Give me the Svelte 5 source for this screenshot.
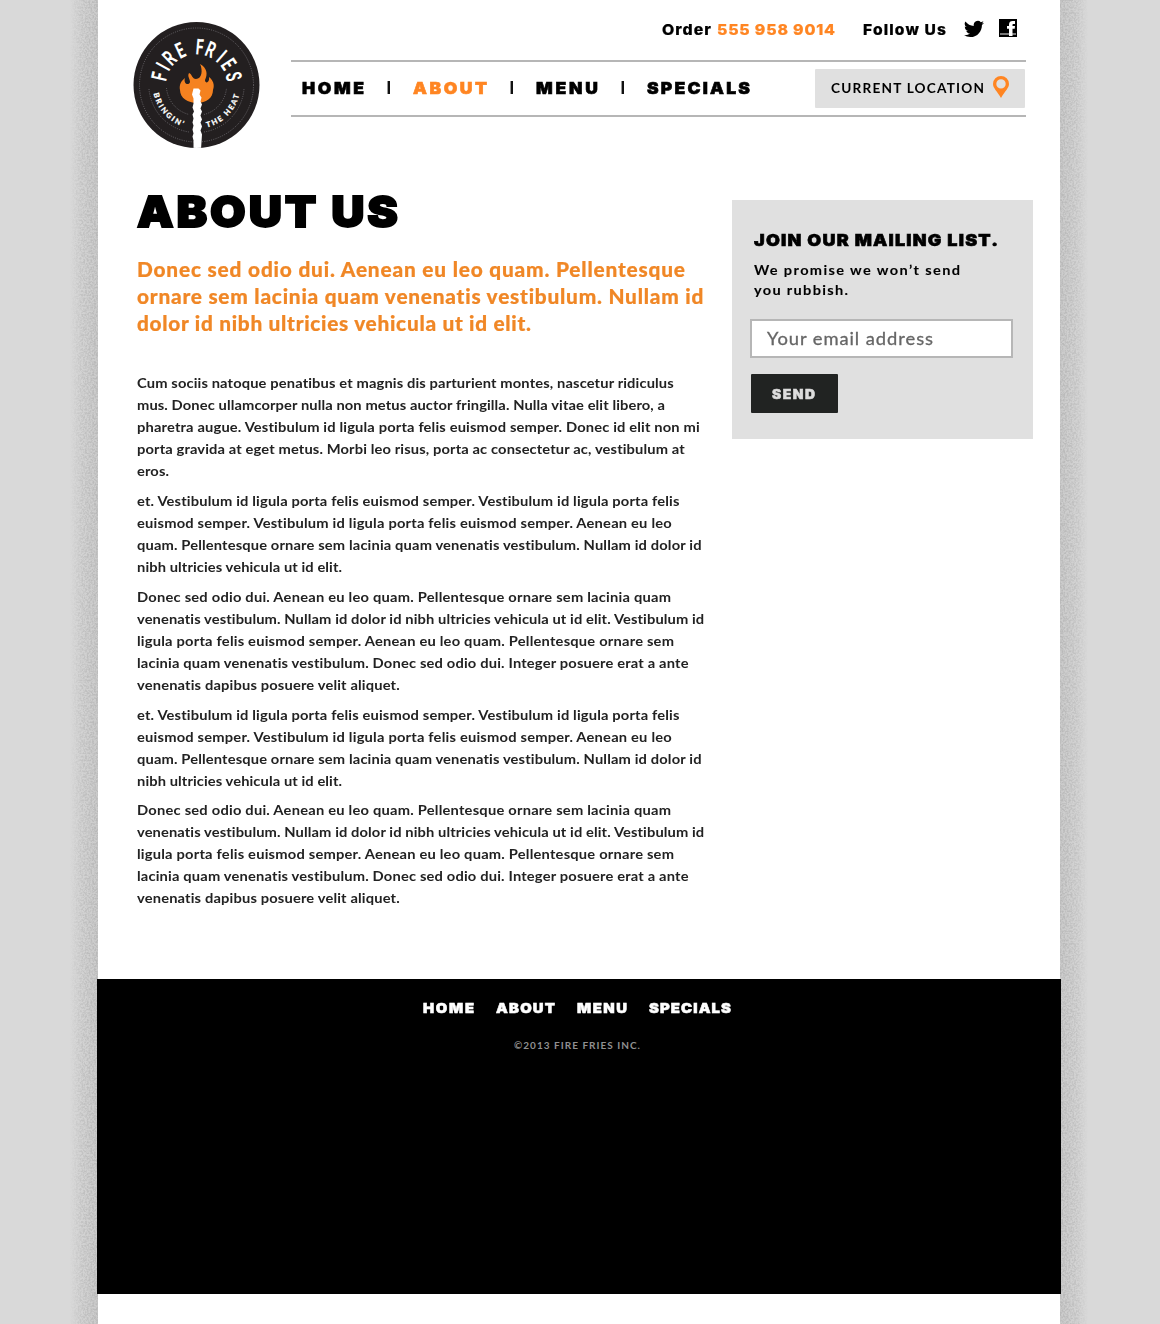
<script>
  const nav = [
    { label: 'HOME', width: 62, active: false },
    { label: 'ABOUT', width: 74, active: true },
    { label: 'MENU', width: 62, active: false },
    { label: 'SPECIALS', width: 103, active: false }
  ];
  const footerNav = [
    { label: 'HOME', width: 51 },
    { label: 'ABOUT', width: 59 },
    { label: 'MENU', width: 50 },
    { label: 'SPECIALS', width: 82 }
  ];
  // Letters of the badge and their bearing, in degrees from twelve o'clock.
  const brand = [['F', -77], ['I', -61], ['R', -45], ['E', -25], ['F', 5], ['R', 22], ['I', 41], ['E', 57], ['S', 77]];

  const intro = [
    ['Donec sed odio dui. Aenean eu leo quam. Pellentesque', 548],
    ['ornare sem lacinia quam venenatis vestibulum. Nullam id', 567],
    ['dolor id nibh ultricies vehicula ut id elit.', 394]
  ];
  const vestibulum = [
    ['et. Vestibulum id ligula porta felis euismod semper. Vestibulum id ligula porta felis', 543],
    ['euismod semper. Vestibulum id ligula porta felis euismod semper. Aenean eu leo', 535],
    ['quam. Pellentesque ornare sem lacinia quam venenatis vestibulum. Nullam id dolor id', 565],
    ['nibh ultricies vehicula ut id elit.', 205]
  ];
  const donec = [
    ['Donec sed odio dui. Aenean eu leo quam. Pellentesque ornare sem lacinia quam', 534],
    ['venenatis vestibulum. Nullam id dolor id nibh ultricies vehicula ut id elit. Vestibulum id', 568],
    ['ligula porta felis euismod semper. Aenean eu leo quam. Pellentesque ornare sem', 537],
    ['lacinia quam venenatis vestibulum. Donec sed odio dui. Integer posuere erat a ante', 552],
    ['venenatis dapibus posuere velit aliquet.', 263]
  ];
  const paragraphs = [
    [
      ['Cum sociis natoque penatibus et magnis dis parturient montes, nascetur ridiculus', 537],
      ['mus. Donec ullamcorper nulla non metus auctor fringilla. Nulla vitae elit libero, a', 528],
      ['pharetra augue. Vestibulum id ligula porta felis euismod semper. Donec id elit non mi', 563],
      ['porta gravida at eget metus. Morbi leo risus, porta ac consectetur ac, vestibulum at', 548],
      ['eros.', 32]
    ],
    vestibulum,
    donec,
    vestibulum,
    donec
  ];

  // Sets a line of type to a measure: widens the glyphs, then tracks the rest.
  function track(node, [width, stretch = 1]) {
    const inner = width / stretch;
    const natural = node.getBoundingClientRect().width;
    const spacing = (inner - natural) / (node.textContent.length - 1);
    node.style.letterSpacing = spacing + 'px';
    node.style.marginRight = width - inner - spacing + 'px';
    if (stretch !== 1) {
      node.style.transformOrigin = '0 50%';
      node.style.transform = `scaleX(${stretch})`;
    }
  }
</script>

<div class="page">
  <svg class="grain" aria-hidden="true">
    <defs>
      <filter id="noise" x="0" y="0" width="100%" height="100%" color-interpolation-filters="sRGB">
        <feTurbulence type="fractalNoise" baseFrequency="0.55" numOctaves="2" seed="4" />
        <feColorMatrix values="0 0 0 0 0.71  0 0 0 0 0.71  0 0 0 0 0.71  3 0 0 0 -1.1" />
      </filter>
      <linearGradient id="fadeL"><stop offset="0" stop-color="#000" /><stop offset=".4" stop-color="#888" /><stop offset="1" stop-color="#ddd" /></linearGradient>
      <linearGradient id="fadeR"><stop offset="0" stop-color="#ddd" /><stop offset=".6" stop-color="#888" /><stop offset="1" stop-color="#000" /></linearGradient>
      <mask id="maskL" maskUnits="userSpaceOnUse" x="70" y="0" width="28" height="1324"><rect x="70" width="28" height="1324" fill="url(#fadeL)" /></mask>
      <mask id="maskR" maskUnits="userSpaceOnUse" x="1060" y="0" width="28" height="1324"><rect x="1060" width="28" height="1324" fill="url(#fadeR)" /></mask>
    </defs>
    <g mask="url(#maskL)"><rect x="70" width="28" height="1324" filter="url(#noise)" /></g>
    <g mask="url(#maskR)"><rect x="1060" width="28" height="1324" filter="url(#noise)" /></g>
  </svg>

  <div class="sheet">
    <header>
      <svg class="logo" viewBox="0 0 128 127" role="img" aria-label="Fire Fries">
        <defs>
          <path id="arcLeft" d="M20.500 70.500 A43.6 43.6 0 0 0 60 106.500" />
          <path id="arcRight" d="M67 106.500 A43.6 43.6 0 0 0 106.800 70" />
          <clipPath id="disc"><circle cx="63.5" cy="63" r="63" /></clipPath>
        </defs>
        <circle cx="63.5" cy="63" r="63" fill="#231f20" />
        <g fill="none" stroke="#77757a" stroke-width=".8" stroke-dasharray="1 1.3">
          <circle cx="63.5" cy="63" r="57" />
          <path d="M16 67 A47.5 47.5 0 0 0 56 110 M71 110 A47.5 47.5 0 0 0 111 67 M33.5 66 A30 30 0 0 0 56 92.5 M71 92.5 A30 30 0 0 0 93.500 66" />
        </g>
        <g fill="#fff">
          {#each brand as [letter, angle]}
            <text class="brand" text-anchor="middle" transform="rotate({angle} 63.5 63) translate(63.5 32.5) scale(.63 1)">{letter}</text>
          {/each}
          <text class="motto" textLength="46"><textPath href="#arcLeft" startOffset="1">BRINGIN’</textPath></text>
          <text class="motto" textLength="48"><textPath href="#arcRight" startOffset="7">THE HEAT</textPath></text>
        </g>
        <path d="M67 42 C74 46 75 52 72 58 C72 62 77 61 76 55 C82 60 81 65 80 68 C80 76 73 81 64 81 C55 81 47 76 47 68 C46 63 48 59 52 56 C50 62 56 64 57 60 C57 57 54 54 56 51 C59 52 59 57 63 57 C69 57 70 48 67 42Z" fill="#f58220" />
        <path clip-path="url(#disc)" d="M60.500 66.500 h5 l2 2 -1 4 2 3 -1 4 1.500 3 -1.500 4 1.500 3 -1.500 4 1.500 4 -1.500 3 1.500 4 -1.500 4 1.500 4 -1 15 h-7.500 v-9 l-1-4 1-3 -1-4 1-4 -1-3 1-4 -1-4 1.500-3 -1.500-4 1-4 0-5 -1.500-4Z" fill="#fff" />
      </svg>

      <div class="masthead">
        <div class="top">
          <span class="order"><b use:track={[49, 1.06]}>Order</b> <b class="phone" use:track={[118, 1.06]}>555 958 9014</b></span>
          <b class="follow" use:track={[83, 1.04]}>Follow Us</b>
          <svg class="twitter" viewBox="0 0 24 24" aria-label="Twitter"><path d="M24 4.600a10 10 0 0 1-2.800.8 5 5 0 0 0 2.100-2.700 10 10 0 0 1-3.100 1.200 4.900 4.900 0 0 0-8.400 4.500A14 14 0 0 1 1.700 3.100a4.900 4.900 0 0 0 1.500 6.600 5 5 0 0 1-2.200-.6v.1a4.900 4.900 0 0 0 3.900 4.800 5 5 0 0 1-2.200.1 4.900 4.900 0 0 0 4.600 3.400A9.900 9.900 0 0 1 0 19.500a14 14 0 0 0 7.500 2.200c9.100 0 14-7.500 14-14v-.6A10 10 0 0 0 24 4.600z" /></svg>
          <svg class="facebook" viewBox="0 0 18 18" aria-label="Facebook"><path d="M0 0h18v18H0z" /><path d="M1 14h16v2H1z" fill="#777" /><path d="M8 7h2V5.500C10 3 11.500 2 13.500 2H16v3h-1.500c-.8 0-1 .4-1 1v1H16l-.3 2.800h-2.200V17H10V9.800H8z" fill="#fff" /></svg>
        </div>
        <div class="bar">
          <nav>
            {#each nav as item, i}
              {#if i}<i></i>{/if}
              <a href="#top" class:active={item.active}><span use:track={[item.width, 1.06]}>{item.label}</span></a>
            {/each}
          </nav>
          <div class="location">
            <span use:track={[153, 1.01]}>CURRENT LOCATION</span>
            <svg viewBox="0 0 16 22" aria-hidden="true"><path fill-rule="evenodd" d="M8 0a8 8 0 0 1 8 8c0 4-4 7-8 14C4 15 0 12 0 8a8 8 0 0 1 8-8zm0 3.200a4.700 4.700 0 1 0 0 9.400 4.700 4.700 0 0 0 0-9.400z" /></svg>
          </div>
        </div>
      </div>
    </header>

    <main>
      <article>
        <h1><span use:track={[261, 1.07]}>ABOUT US</span></h1>
        <p class="intro">
          {#each intro as [text, width]}<span class="line"><span use:track={[width, 1.04]}>{text}</span></span>{/each}
        </p>
        <div class="copy">
          {#each paragraphs as lines}
            <p>{#each lines as [text, width]}<span class="line"><span use:track={[width, 1.05]}>{text}</span></span>{/each}</p>
          {/each}
        </div>
      </article>

      <aside>
        <h2><span use:track={[244, 1.09]}>JOIN OUR MAILING LIST.</span></h2>
        <p>
          <span class="line"><span use:track={[206, 1.04]}>We promise we won’t send</span></span>
          <span class="line"><span use:track={[94, 1.04]}>you rubbish.</span></span>
        </p>
        <div class="field"><span use:track={[166, 1.05]}>Your email address</span></div>
        <button><span use:track={[43, 1.07]}>SEND</span></button>
      </aside>
    </main>

    <footer>
      <nav>
        {#each footerNav as item}<a href="#top"><span use:track={[item.width, 1.1]}>{item.label}</span></a>{/each}
      </nav>
      <small><span use:track={[126, 1]}>©2013 FIRE FRIES INC.</span></small>
    </footer>
  </div>
</div>

<style>
  :global(body) { background: #d9d9d9; }
  .page { position: relative; height: 1324px; overflow: hidden; font-family: Lato, sans-serif; color: #000; background: linear-gradient(90deg, #d9d9d9 70px, #cbcbcb 98px, #cbcbcb 1060px, #d9d9d9 1088px); }
  .page * { box-sizing: border-box; }
  .grain { position: absolute; inset: 0; width: 1160px; height: 1324px; }
  .sheet { position: relative; width: 964px; height: 1324px; margin-left: 97px; background: linear-gradient(#fff, #fff) 1px 0 / 962px 100% no-repeat; }
  span, b { display: inline-block; white-space: nowrap; }
  h1, h2, p { margin: 0; }
  a { color: inherit; text-decoration: none; }

  header { display: flex; height: 160px; }
  .logo { width: 128px; height: 127px; margin: 22px 0 0 36px; }
  .brand { font: 700 22px Roboto, sans-serif; }
  .motto { font: 900 7.500px Lato, sans-serif; stroke: #fff; stroke-width: .2px; }
  .masthead { width: 735px; margin-left: 30px; }
  .top { display: flex; height: 60px; padding: 19px 9px 0 371px; font-family: Inter, sans-serif; font-size: 15px; line-height: 22px; }
  .top b { font-weight: 800; -webkit-text-stroke: .2px currentColor; }
  .order { display: flex; gap: 6px; }
  .phone { color: #ff8522; }
  .follow { margin-left: 28px; }
  .twitter { width: 20px; height: 20px; margin-left: 18px; }
  .facebook { width: 18px; height: 18px; margin-left: 15px; }
  .bar { display: flex; justify-content: space-between; height: 57px; padding: 7px 1px 0 11px; border: solid #b6b6b6; border-width: 2px 0; }
  .bar nav { display: flex; align-items: center; height: 37px; font: 900 16.500px/22px Inter, sans-serif; -webkit-text-stroke: .6px currentColor; }
  .bar i { width: 3px; height: 13px; margin: 0 23px; border-left: 1px solid #999; background: #111; }
  .active { color: #ff8522; }
  .location { display: flex; width: 210px; height: 39px; padding: 7px 0 0 16px; background: #e0e0e0; border-radius: 1px; font-size: 13.500px; font-weight: 700; line-height: 24px; }
  .location svg { width: 16px; height: 22px; margin-left: 9px; fill: #ff8522; }

  main { display: flex; height: 819px; padding: 27px 28px 0 40px; justify-content: space-between; }
  article { width: 580px; }
  h1 { height: 67px; font: 900 43px/49px Inter, sans-serif; -webkit-text-stroke: 1.800px #000; }
  .line { display: block; }
  .intro { height: 118px; color: #f08726; font-size: 20px; font-weight: 900; line-height: 27px; padding-top: 2px; -webkit-text-stroke: .2px #f08726; }
  .copy { color: #222; font-size: 14px; font-weight: 700; line-height: 22px; }
  .copy p { margin-bottom: 8px; }
  .copy p:nth-child(4) { margin-bottom: 7px; }
  .copy .line, .intro .line { height: 1lh; }

  aside { width: 301px; height: 239px; margin-top: 13px; padding: 29px 18px; background: #e0e0e0; }
  h2 { padding-left: 4px; font: 900 16.500px/22px Inter, sans-serif; -webkit-text-stroke: .6px #000; }
  aside p { height: 49px; padding: 9px 0 0 4px; font-size: 14px; font-weight: 700; line-height: 20px; -webkit-text-stroke: .1px #000; }
  .field { width: 263px; height: 39px; margin-top: 19px; padding: 0 15px; border: 2px solid #b6b6b6; background: #fff; color: #666; font-size: 17.500px; line-height: 35px; -webkit-text-stroke: .3px #666; }
  button { display: block; width: 87px; height: 39px; margin: 16px 0 0 1px; padding: 0 0 0 21px; border: 0; border-radius: 1px; background: #212322; color: #ddd; font: 900 13px Inter, sans-serif; text-align: left; -webkit-text-stroke: .5px #ddd; }

  footer { height: 315px; padding-top: 18px; background: #000; color: #fff; }
  footer nav { display: flex; gap: 22px; padding-left: 326px; font: 900 13.500px/22px Inter, sans-serif; -webkit-text-stroke: .5px #fff; }
  small { display: block; padding: 19px 0 0 417px; color: #909090; font-size: 10px; font-weight: 700; line-height: 14px; }
</style>
